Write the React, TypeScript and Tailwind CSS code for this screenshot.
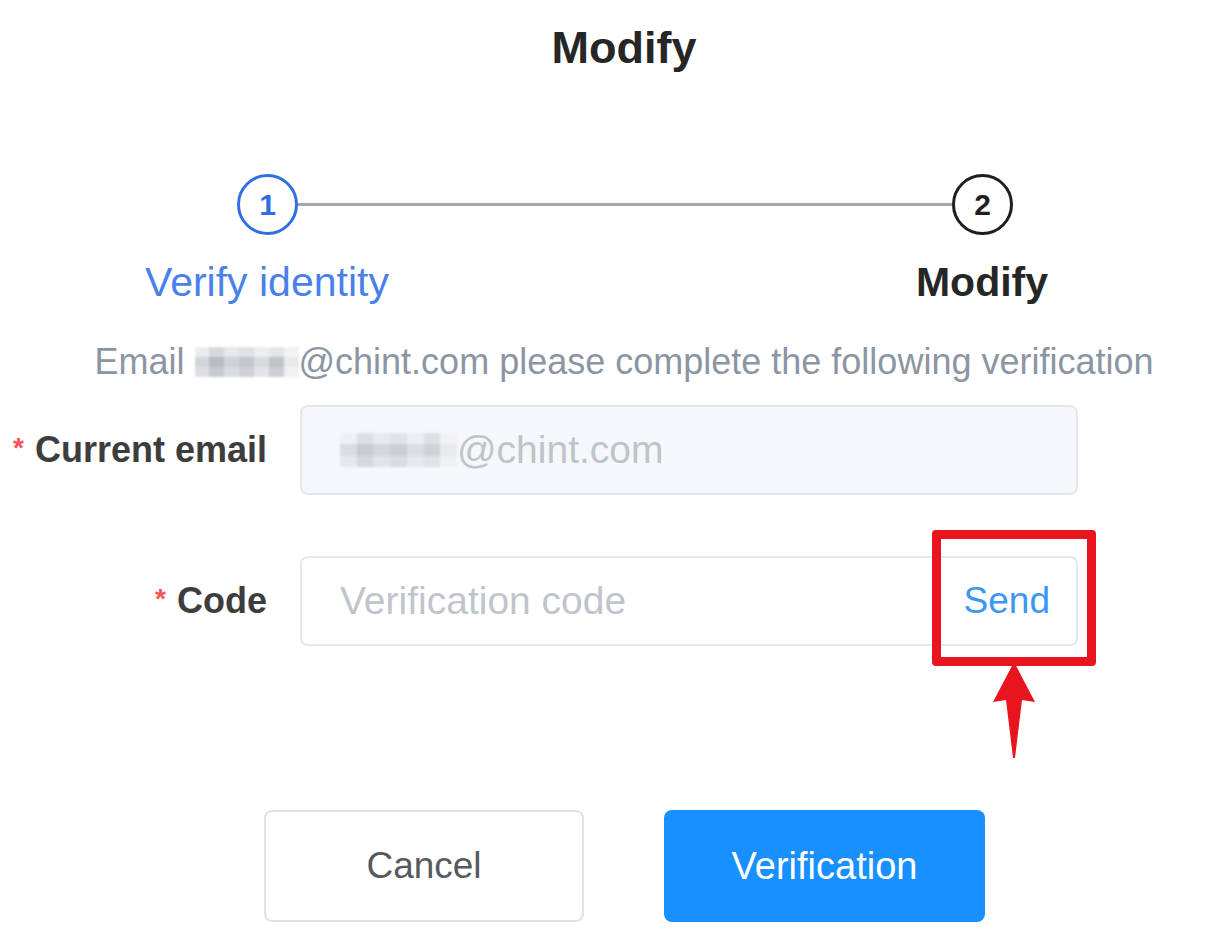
import React from "react";

function Pixelated({ w, h, cols }: { w: number; h: number; cols: string[][] }) {
  return (
    <span
      className="inline-flex flex-col align-middle blur-[1.2px]"
      style={{ width: w, height: h }}
    >
      {cols.map((row, i) => (
        <span key={i} className="flex flex-1">
          {row.map((c, j) => (
            <span key={j} className="flex-1" style={{ backgroundColor: c }} />
          ))}
        </span>
      ))}
    </span>
  );
}

const subBlur = [
  ["#e9ecef", "#d5d8dc", "#e6e8eb", "#dfe2e5", "#eceef0", "#e3e5e8", "#f1f2f4"],
  ["#d2d5d9", "#b9bdc3", "#cfd2d6", "#c3c6cb", "#d8dbde", "#bfc3c8", "#e7e9eb"],
  ["#dcdfe2", "#c6c9ce", "#d9dcdf", "#cdd0d4", "#e2e4e7", "#cbced2", "#eef0f1"],
];

const inBlur = [
  ["#eef0f3", "#dcdfe3", "#e7e9ec", "#e0e3e6", "#eceef1", "#dde0e4", "#f0f2f4"],
  ["#d9dce0", "#c8ccd1", "#d4d7db", "#cbced3", "#dadde1", "#ced1d6", "#e8eaed"],
  ["#e5e8eb", "#d5d8dc", "#e1e4e7", "#dadde0", "#e6e8eb", "#e0e2e5", "#eef0f2"],
];

export default function App() {
  return (
    <div
      className="w-[1210px] h-[945px] bg-white overflow-hidden relative"
      style={{ fontFamily: '"Liberation Sans", Arial, sans-serif' }}
    >
      {/* Title */}
      <div className="h-[96px] flex items-center justify-center pl-[38px]">
        <span className="text-[45px] font-bold text-[#262626] leading-[52px]">Modify</span>
      </div>

      {/* Steps circles + line */}
      <div className="mt-[78px] flex items-center pl-[237px] pr-[197px]">
        <div className="w-[61px] h-[61px] rounded-full border-[3px] border-[#2f6fe3] flex items-center justify-center text-[#2f6fe3] text-[30px] font-bold leading-none">
          1
        </div>
        <div className="flex-1 h-[3px] bg-[#a3a7ae]" />
        <div className="w-[61px] h-[61px] rounded-full border-[3px] border-[#1f1f1f] flex items-center justify-center text-[#1f1f1f] text-[30px] font-bold leading-none">
          2
        </div>
      </div>

      {/* Step labels */}
      <div className="mt-[23px] flex pl-[117px] gap-[415px]">
        <div className="w-[300px] text-center text-[41px] leading-[48px] text-[#4a80ea]">Verify identity</div>
        <div className="w-[300px] text-center text-[41px] leading-[48px] font-bold text-[#262626]">Modify</div>
      </div>

      {/* Subtitle */}
      <div className="mt-[34px] flex justify-center pl-[38px]">
        <p className="text-[36px] leading-[44px] text-[#8b95a3] whitespace-nowrap flex items-center">
          <span>Email&nbsp;</span>
          <Pixelated w={104} h={30} cols={subBlur} />
          <span>@chint.com please complete the following verification</span>
        </p>
      </div>

      {/* Current email */}
      <div className="mt-[21px] flex items-center">
        <div className="w-[300px] pr-[33px] flex justify-end items-center">
          <span className="text-[#f45454] text-[28px] font-bold leading-none self-start mt-[6px] mr-[11px]">*</span>
          <span className="text-[36px] font-bold text-[#3d3d3d] leading-[44px]">Current email</span>
        </div>
        <div className="w-[778px] h-[90px] rounded-[8px] border-2 border-[#e4e7ed] bg-[#f5f7fa] flex items-center pl-[38px] text-[39px] text-[#bfc3ca]">
          <Pixelated w={117} h={34} cols={inBlur} />
          <span>@chint.com</span>
        </div>
      </div>

      {/* Code */}
      <div className="mt-[61px] flex items-center">
        <div className="w-[300px] pr-[33px] flex justify-end items-center">
          <span className="text-[#f45454] text-[28px] font-bold leading-none self-start mt-[6px] mr-[11px]">*</span>
          <span className="text-[36px] font-bold text-[#3d3d3d] leading-[44px]">Code</span>
        </div>
        <div className="relative w-[778px] h-[90px] rounded-[8px] border-2 border-[#e4e7ed] bg-white flex items-center pl-[38px] pr-[26px]">
          <span className="flex-1 text-[39px] text-[#c0c4cc]">Verification code</span>
          <span className="text-[37px] text-[#3a97f5]">Send</span>
          {/* annotation box */}
          <div className="absolute left-[630px] top-[-28px] w-[164px] h-[136px] border-[9px] border-[#e8151f] rounded-[4px]" />
          {/* annotation arrow */}
          <svg
            className="absolute left-[690px] top-[104px]"
            width="44"
            height="98"
            viewBox="0 0 44 98"
          >
            <path d="M22 0 L43 40 L30 38 L23 96 L21 96 L14 38 L1 40 Z" fill="#e8151f" />
          </svg>
        </div>
      </div>

      {/* Buttons */}
      <div className="mt-[164px] flex pl-[264px] gap-[80px]">
        <button className="w-[320px] h-[112px] rounded-[8px] border-2 border-[#dfe1e6] bg-white text-[37px] text-[#555a60]">
          Cancel
        </button>
        <button className="w-[321px] h-[112px] rounded-[8px] bg-[#1890ff] text-[38px] text-white">
          Verification
        </button>
      </div>
    </div>
  );
}
